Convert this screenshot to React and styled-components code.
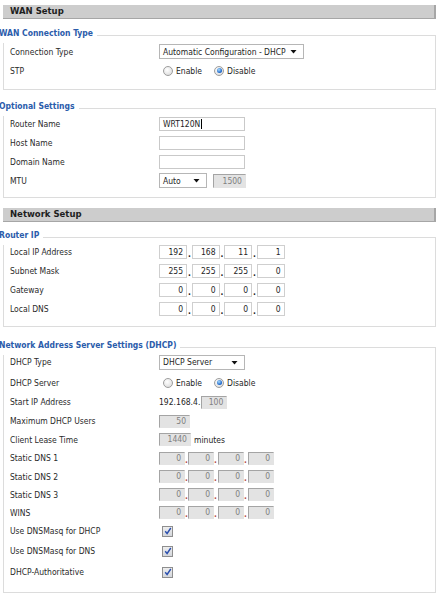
import React from 'react'
import styled, { createGlobalStyle, css } from 'styled-components'

const GlobalStyle = createGlobalStyle`
	body {
		margin: 0;
		background: #fff;
		color: #2a2a2a;
		font-family: "DejaVu Sans Condensed", "DejaVu Sans", sans-serif;
		font-size: 8.5px;
	}
`

const Page = styled.div`
	padding: 5px 6px 0 3px;
`

const SectionBar = styled.div`
	height: 13px;
	line-height: 13px;
	padding-left: 7px;
	margin-top: ${p => p.$gap || 0}px;
	background: #cdcdcd;
	border-bottom: 1px solid #a6a6a6;
	border-right: 2px solid #a6a6a6;
	font-family: "DejaVu Sans", sans-serif;
	font-weight: bold;
	font-size: 8.5px;
	color: #1e1e1e;
`

const Group = styled.fieldset`
	margin: ${p => p.$gap}px 0 0;
	padding: 0 0 ${p => p.$pb}px 6px;
	border: 1px solid #dcdcdc;
	min-width: 0;
`

const Legend = styled.legend`
	margin-left: -11px;
	padding: 0 4px 4px 0;
	line-height: 11px;
	font-weight: bold;
	color: #2b5cab;
`

const Rows = styled.div`
	margin-top: ${p => p.$shift || 0}px;
`

const Row = styled.div`
	display: grid;
	grid-template-columns: 149px 1fr;
	align-items: center;
	height: ${p => p.$h}px;
`

const Label = styled.div`
	white-space: nowrap;
`

const Field = styled.div`
	display: flex;
	align-items: center;
	white-space: nowrap;
`

const SelectBox = styled.div`
	box-sizing: border-box;
	width: ${p => p.$w}px;
	height: 15px;
	display: flex;
	align-items: center;
	justify-content: space-between;
	padding: 0 6px 0 3px;
	background: #fff;
	border: 1px solid #b6b6b6;
	color: #1e1e1e;
`

const TextBox = styled.div`
	box-sizing: border-box;
	width: 86px;
	height: 14px;
	padding: 0 3px;
	line-height: 12px;
	background: #fff;
	border: 1px solid #c9c9c9;
	color: #1e1e1e;
`

const Caret = styled.span`
	display: inline-block;
	width: 1px;
	height: 10px;
	margin-left: 1px;
	vertical-align: -2px;
	background: #000;
`

const NumBox = styled.div`
	box-sizing: border-box;
	width: ${p => p.$w}px;
	height: ${p => p.$h}px;
	margin-left: ${p => p.$ml || 0}px;
	padding-right: 3px;
	text-align: right;
	line-height: ${p => p.$h - 2}px;
	${p => p.$off
		? css`
			background: #e3e3e3;
			border: 1px solid #e3e3e3;
			border-top-color: #a4a4a4;
			border-left-color: #a4a4a4;
			color: #808080;
		`
		: css`
			background: #fff;
			border: 1px solid #cfcfcf;
			color: #1e1e1e;
		`}
`

const Dot = styled.span`
	width: ${p => p.$w}px;
	align-self: flex-end;
	line-height: 10px;
	font-weight: bold;
	color: ${p => (p.$red ? '#b24a4a' : '#222')};
	text-indent: ${p => (p.$red ? 0 : 1)}px;
	overflow: hidden;
`

const Plain = styled.span`
	margin: 0 ${p => p.$mr || 0}px 0 ${p => p.$ml || 0}px;
	color: #1e1e1e;
`

const RadioOption = styled.label`
	display: flex;
	align-items: center;
	margin-left: ${p => p.$ml || 0}px;
	gap: 3px;
`

const Radio = styled.span`
	position: relative;
	box-sizing: border-box;
	width: 10px;
	height: 10px;
	border-radius: 50%;
	border: 1px solid #9d9d9d;
	background: radial-gradient(circle at 40% 35%, #ffffff, #d6d6d6);
	${p => p.$on && css`
		&::after {
			content: '';
			position: absolute;
			left: 1.5px;
			top: 1.5px;
			width: 5px;
			height: 5px;
			border-radius: 50%;
			background: radial-gradient(circle at 40% 35%, #a8dcff, #1660c6 70%, #0b3f8a);
		}
	`}
`

const CheckBox = styled.span`
	display: inline-flex;
	align-items: center;
	justify-content: center;
	box-sizing: border-box;
	width: 11px;
	height: 11px;
	margin-left: 3px;
	border: 1px solid #8e8e8e;
	background: linear-gradient(#eeeeee, #d3d6db);
`

const Arrow = () => (
	<svg width="7" height="5" viewBox="0 0 7 5">
		<path d="M0.5 1h6L3.5 4.5z" fill="#111" />
	</svg>
)

const Select = ({ w, children }) => (
	<SelectBox $w={w}>
		<span>{children}</span>
		<Arrow />
	</SelectBox>
)

const Tick = () => (
	<CheckBox>
		<svg width="8" height="8" viewBox="0 0 8 8">
			<path d="M1.2 4.2l1.9 2.3L6.8 1" fill="none" stroke="#2b4fae" strokeWidth="1.4" />
		</svg>
	</CheckBox>
)

const EnableDisable = () => (
	<>
		<RadioOption $ml={4}>
			<Radio />
			<Plain>Enable</Plain>
		</RadioOption>
		<RadioOption $ml={12}>
			<Radio $on />
			<Plain>Disable</Plain>
		</RadioOption>
	</>
)

const IpInputs = ({ values }) => (
	<>
		{values.map((v, i) => (
			<React.Fragment key={i}>
				{i > 0 && <Dot $w={4.5}>.</Dot>}
				<NumBox $w={28} $h={14}>{v}</NumBox>
			</React.Fragment>
		))}
	</>
)

const GreyIp = () => (
	<>
		{[0, 1, 2, 3].map(i => (
			<React.Fragment key={i}>
				{i > 0 && <Dot $w={i === 1 ? 3 : 4} $red>.</Dot>}
				<NumBox $w={26} $h={13} $off>0</NumBox>
			</React.Fragment>
		))}
	</>
)

const App = () => (
	<Page>
		<GlobalStyle />

		<SectionBar>WAN Setup</SectionBar>
		<Group $gap={8.5} $pb={8}>
			<Legend>WAN Connection Type</Legend>
			<Rows>
				<Row $h={18}>
					<Label>Connection Type</Label>
					<Field>
						<Select w={145}>Automatic Configuration - DHCP</Select>
					</Field>
				</Row>
				<Row $h={20}>
					<Label>STP</Label>
					<Field>
						<EnableDisable />
					</Field>
				</Row>
			</Rows>
		</Group>

		<Group $gap={11.5} $pb={7}>
			<Legend>Optional Settings</Legend>
			<Rows $shift={-2}>
				<Row $h={19}>
					<Label>Router Name</Label>
					<Field>
						<TextBox>WRT120N<Caret /></TextBox>
					</Field>
				</Row>
				<Row $h={19}>
					<Label>Host Name</Label>
					<Field>
						<TextBox />
					</Field>
				</Row>
				<Row $h={19}>
					<Label>Domain Name</Label>
					<Field>
						<TextBox />
					</Field>
				</Row>
				<Row $h={19}>
					<Label>MTU</Label>
					<Field>
						<Select w={48}>Auto</Select>
						<NumBox $w={33} $h={14} $ml={6} $off>1500</NumBox>
					</Field>
				</Row>
			</Rows>
		</Group>

		<SectionBar $gap={10}>Network Setup</SectionBar>
		<Group $gap={7.5} $pb={7}>
			<Legend>Router IP</Legend>
			<Rows $shift={-2}>
				<Row $h={19}>
					<Label>Local IP Address</Label>
					<Field>
						<IpInputs values={['192', '168', '11', '1']} />
					</Field>
				</Row>
				<Row $h={19}>
					<Label>Subnet Mask</Label>
					<Field>
						<IpInputs values={['255', '255', '255', '0']} />
					</Field>
				</Row>
				<Row $h={19}>
					<Label>Gateway</Label>
					<Field>
						<IpInputs values={['0', '0', '0', '0']} />
					</Field>
				</Row>
				<Row $h={19}>
					<Label>Local DNS</Label>
					<Field>
						<IpInputs values={['0', '0', '0', '0']} />
					</Field>
				</Row>
			</Rows>
		</Group>

		<Group $gap={13} $pb={9}>
			<Legend>Network Address Server Settings (DHCP)</Legend>
			<Rows $shift={-3}>
				<Row $h={21}>
					<Label>DHCP Type</Label>
					<Field>
						<Select w={86}>DHCP Server</Select>
					</Field>
				</Row>
				<Row $h={20}>
					<Label>DHCP Server</Label>
					<Field>
						<EnableDisable />
					</Field>
				</Row>
				<Row $h={19}>
					<Label>Start IP Address</Label>
					<Field>
						<Plain $mr={1}>192.168.4.</Plain>
						<NumBox $w={26} $h={13} $off>100</NumBox>
					</Field>
				</Row>
				<Row $h={19}>
					<Label>Maximum DHCP Users</Label>
					<Field>
						<NumBox $w={31} $h={13} $off>50</NumBox>
					</Field>
				</Row>
				<Row $h={18}>
					<Label>Client Lease Time</Label>
					<Field>
						<NumBox $w={32} $h={13} $off>1440</NumBox>
						<Plain $ml={3}>minutes</Plain>
					</Field>
				</Row>
				<Row $h={19}>
					<Label>Static DNS 1</Label>
					<Field>
						<GreyIp />
					</Field>
				</Row>
				<Row $h={18}>
					<Label>Static DNS 2</Label>
					<Field>
						<GreyIp />
					</Field>
				</Row>
				<Row $h={18}>
					<Label>Static DNS 3</Label>
					<Field>
						<GreyIp />
					</Field>
				</Row>
				<Row $h={18}>
					<Label>WINS</Label>
					<Field>
						<GreyIp />
					</Field>
				</Row>
				<Row $h={19}>
					<Label>Use DNSMasq for DHCP</Label>
					<Field>
						<Tick />
					</Field>
				</Row>
				<Row $h={21}>
					<Label>Use DNSMasq for DNS</Label>
					<Field>
						<Tick />
					</Field>
				</Row>
				<Row $h={21}>
					<Label>DHCP-Authoritative</Label>
					<Field>
						<Tick />
					</Field>
				</Row>
			</Rows>
		</Group>
	</Page>
)

export default App
